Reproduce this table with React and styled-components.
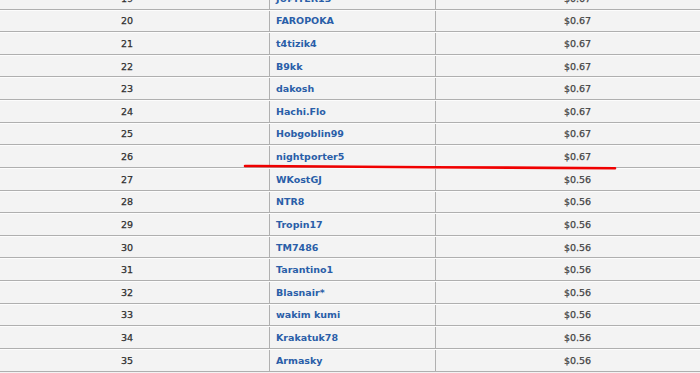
import React from "react";
import styled, { createGlobalStyle } from "styled-components";

const GlobalStyle = createGlobalStyle`
  html, body {
    margin: 0;
    padding: 0;
    background: #f3f3f3;
    overflow: hidden;
  }
  body {
    width: 700px;
    height: 373px;
  }
`;

const Page = styled.div`
  position: relative;
  width: 700px;
  height: 373px;
  overflow: hidden;
`;

const Table = styled.div`
  width: 734px;
  margin-left: -15px;
  margin-top: -13.14px;
  display: flex;
  flex-direction: column;
  font-family: "DejaVu Sans", Verdana, sans-serif;
  font-size: 9.5px;
`;

const Row = styled.div`
  display: grid;
  grid-template-columns: 284px 166px 284px;
  height: 22.64px;
  box-sizing: border-box;
  background: #f3f3f3;
  border-top: 1px solid #fcfcfc;
  border-bottom: 1px solid #afafaf;
`;

const Cell = styled.div`
  display: flex;
  align-items: center;
  justify-content: ${(p) => (p.$left ? "flex-start" : "center")};
  padding-left: ${(p) => (p.$left ? "6px" : "0")};
  border-left: ${(p) => (p.$divider ? "1px solid #b0b0b0" : "none")};
  color: ${(p) => p.$color};
  font-weight: ${(p) => (p.$bold ? 700 : 400)};
  -webkit-text-stroke: ${(p) => (p.$bold ? "0" : "0.25px")};
  white-space: nowrap;
`;

const Marker = styled.svg`
  position: absolute;
  left: 0;
  top: 0;
  pointer-events: none;
`;

const rows = [
  [19, "JUPITER13", "$0.67"],
  [20, "FAROPOKA", "$0.67"],
  [21, "t4tizik4", "$0.67"],
  [22, "B9kk", "$0.67"],
  [23, "dakosh", "$0.67"],
  [24, "Hachi.Flo", "$0.67"],
  [25, "Hobgoblin99", "$0.67"],
  [26, "nightporter5", "$0.67"],
  [27, "WKostGJ", "$0.56"],
  [28, "NTR8", "$0.56"],
  [29, "Tropin17", "$0.56"],
  [30, "TM7486", "$0.56"],
  [31, "Tarantino1", "$0.56"],
  [32, "Blasnair*", "$0.56"],
  [33, "wakim kumi", "$0.56"],
  [34, "Krakatuk78", "$0.56"],
  [35, "Armasky", "$0.56"],
];

export default function App() {
  return (
    <>
      <GlobalStyle />
      <Page>
        <Table>
          {rows.map(([rank, name, prize]) => (
            <Row key={rank}>
              <Cell $color="#2e2e2e">{rank}</Cell>
              <Cell $left $divider $bold $color="#2a5ea8">
                {name}
              </Cell>
              <Cell $divider $color="#444">
                {prize}
              </Cell>
            </Row>
          ))}
        </Table>
        <Marker width="700" height="373">
          <path
            d="M245 166 L430 167.2 L615 168.2"
            stroke="#f00000"
            strokeWidth="2.6"
            fill="none"
            strokeLinecap="round"
          />
        </Marker>
      </Page>
    </>
  );
}
